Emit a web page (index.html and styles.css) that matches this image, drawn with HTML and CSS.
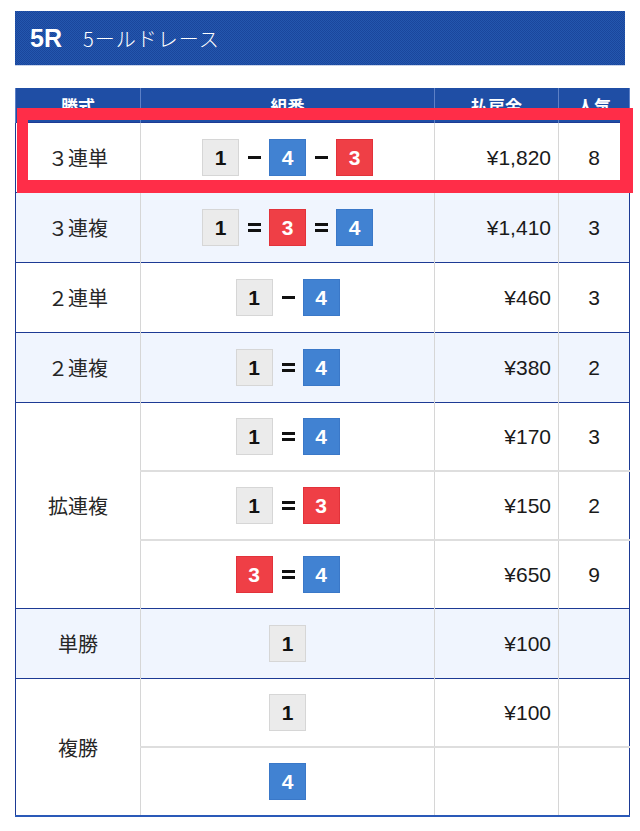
FILE: index.html
```html
<!DOCTYPE html>
<html lang="ja">
<head>
<meta charset="utf-8">
<title>5R 5ールドレース</title>
<link rel="stylesheet" href="styles.css">
</head>
<body>
<div class="page">
  <div class="banner"><span class="race-no">5R</span><span class="race-name">5ールドレース</span></div>

  <div class="result">
    <table class="payout">
      <thead>
        <tr><th class="c1">勝式</th><th class="c2">組番</th><th class="c3">払戻金</th><th class="c4">人気</th></tr>
      </thead>
      <tbody>
        <tr class="grp">
          <td class="c1 label">３連単</td>
          <td class="c2"><div class="combo"><span class="bx g">1</span><span class="sep dash"></span><span class="bx b">4</span><span class="sep dash"></span><span class="bx r">3</span></div></td>
          <td class="c3 money">¥1,820</td><td class="c4 pop">8</td>
        </tr>
        <tr class="grp alt">
          <td class="c1 label">３連複</td>
          <td class="c2"><div class="combo"><span class="bx g">1</span><span class="sep eq"></span><span class="bx r">3</span><span class="sep eq"></span><span class="bx b">4</span></div></td>
          <td class="c3 money">¥1,410</td><td class="c4 pop">3</td>
        </tr>
        <tr class="grp">
          <td class="c1 label">２連単</td>
          <td class="c2"><div class="combo"><span class="bx g">1</span><span class="sep dash"></span><span class="bx b">4</span></div></td>
          <td class="c3 money">¥460</td><td class="c4 pop">3</td>
        </tr>
        <tr class="grp alt">
          <td class="c1 label">２連複</td>
          <td class="c2"><div class="combo"><span class="bx g">1</span><span class="sep eq"></span><span class="bx b">4</span></div></td>
          <td class="c3 money">¥380</td><td class="c4 pop">2</td>
        </tr>
        <tr class="grp sub">
          <td class="c1 label" rowspan="3">拡連複</td>
          <td class="c2"><div class="combo"><span class="bx g">1</span><span class="sep eq"></span><span class="bx b">4</span></div></td>
          <td class="c3 money">¥170</td><td class="c4 pop">3</td>
        </tr>
        <tr class="sub subrow">
          <td class="c2"><div class="combo"><span class="bx g">1</span><span class="sep eq"></span><span class="bx r">3</span></div></td>
          <td class="c3 money">¥150</td><td class="c4 pop">2</td>
        </tr>
        <tr class="sub subrow">
          <td class="c2"><div class="combo"><span class="bx r">3</span><span class="sep eq"></span><span class="bx b">4</span></div></td>
          <td class="c3 money">¥650</td><td class="c4 pop">9</td>
        </tr>
        <tr class="grp alt">
          <td class="c1 label">単勝</td>
          <td class="c2"><div class="combo"><span class="bx g">1</span></div></td>
          <td class="c3 money">¥100</td><td class="c4 pop"></td>
        </tr>
        <tr class="grp sub">
          <td class="c1 label last-cell" rowspan="2">複勝</td>
          <td class="c2"><div class="combo"><span class="bx g">1</span></div></td>
          <td class="c3 money">¥100</td><td class="c4 pop"></td>
        </tr>
        <tr class="sub subrow last">
          <td class="c2"><div class="combo"><span class="bx b">4</span></div></td>
          <td class="c3 money"></td><td class="c4 pop"></td>
        </tr>
      </tbody>
    </table>
    <div class="highlight"></div>
  </div>
</div>
</body>
</html>
```
FILE: styles.css
```css
html, body {
  margin: 0;
  padding: 0;
  background: #ffffff;
}

.page {
  padding: 11px 15px 0 15px;
  font-family: "Liberation Sans", "Noto Sans CJK JP", sans-serif;
  color: #1a1a1a;
}

.banner {
  height: 55px;
  display: flex;
  align-items: center;
  padding-left: 15px;
  box-sizing: border-box;
  background: repeating-conic-gradient(#2457ae 0 25%, #1a469c 0 50%) 0 0 / 2px 2px;
  color: #ffffff;
  border-bottom: 1px solid #c9d4ea;
}

.race-no {
  font-family: "Liberation Sans", sans-serif;
  font-weight: 700;
  font-size: 25px;
  margin-right: 21px;
}

.race-name {
  font-family: "Noto Sans CJK JP", sans-serif;
  font-weight: 300;
  font-size: 20px;
  letter-spacing: 1px;
}

.result {
  position: relative;
  margin-top: 22px;
}

.payout {
  width: 610px;
  border-collapse: collapse;
  table-layout: fixed;
}

.c1 { width: 124px; }
.c2 { width: 293px; }
.c3 { width: 123px; }
.c4 { width: 70px; }

.payout th {
  height: 34px;
  padding: 0;
  background: repeating-conic-gradient(#2457ae 0 25%, #1a469c 0 50%) 0 0 / 2px 2px;
  color: #ffffff;
  font-family: "Noto Sans CJK JP", sans-serif;
  font-weight: 700;
  font-size: 17px;
  border-left: 1px solid #5d80c6;
  border-right: 1px solid #5d80c6;
}

.payout td {
  height: 69px;
  padding: 0;
  vertical-align: middle;
  border-left: 1px solid #d6d6d6;
  border-right: 1px solid #d6d6d6;
  background: #ffffff;
}

.payout tr.alt td {
  background: #f0f5fe;
}

.payout tr.sub td {
  height: 67px;
}

.payout tr.grp td {
  border-top: 1px solid #1d3a94;
}

.payout tr.subrow td {
  border-top: 2px solid #dedede;
}

.payout td.c1 {
  border-left: 1px solid #1d3a94;
}

.payout td.c4 {
  border-right: 1px solid #1d3a94;
}

.payout tr.last td,
.payout td.last-cell {
  border-bottom: 2px solid #2a59b8;
}

.label {
  text-align: center;
  font-family: "Noto Sans CJK JP", sans-serif;
  font-weight: 400;
  font-size: 20px;
  color: #262626;
}

.money {
  text-align: right;
  padding-right: 7px !important;
  font-size: 21px;
  color: #1a1a1a;
}

.pop {
  text-align: center;
  font-size: 21px;
  color: #1a1a1a;
}

.combo {
  display: flex;
  justify-content: center;
  align-items: center;
}

.bx {
  width: 37px;
  height: 37px;
  box-sizing: border-box;
  display: flex;
  align-items: center;
  justify-content: center;
  font-family: "Liberation Sans Narrow", "Liberation Sans", sans-serif;
  font-weight: 700;
  font-size: 21px;
  border: 1px solid transparent;
}

.bx.g {
  background: #ebebeb;
  border-color: #d6d6d6;
  color: #111111;
}

.bx.b {
  background: #4182d2;
  border-color: #3a78c8;
  color: #ffffff;
}

.bx.r {
  background: #ef3f46;
  border-color: #e2323a;
  color: #ffffff;
}

.sep {
  width: 30px;
  height: 37px;
  position: relative;
}

.sep::before,
.sep::after {
  content: "";
  position: absolute;
  left: 9px;
  width: 13px;
  height: 3px;
  background: #111111;
}

.sep.dash::before {
  top: 17px;
}

.sep.dash::after {
  display: none;
}

.sep.eq::before {
  top: 14px;
}

.sep.eq::after {
  top: 20px;
}

.highlight {
  position: absolute;
  left: 2px;
  top: 20px;
  width: 616px;
  height: 85px;
  box-sizing: border-box;
  border: 12px solid #ff2d48;
  border-left-width: 11px;
  border-right-width: 13px;
  border-bottom-width: 13px;
  pointer-events: none;
}
```
